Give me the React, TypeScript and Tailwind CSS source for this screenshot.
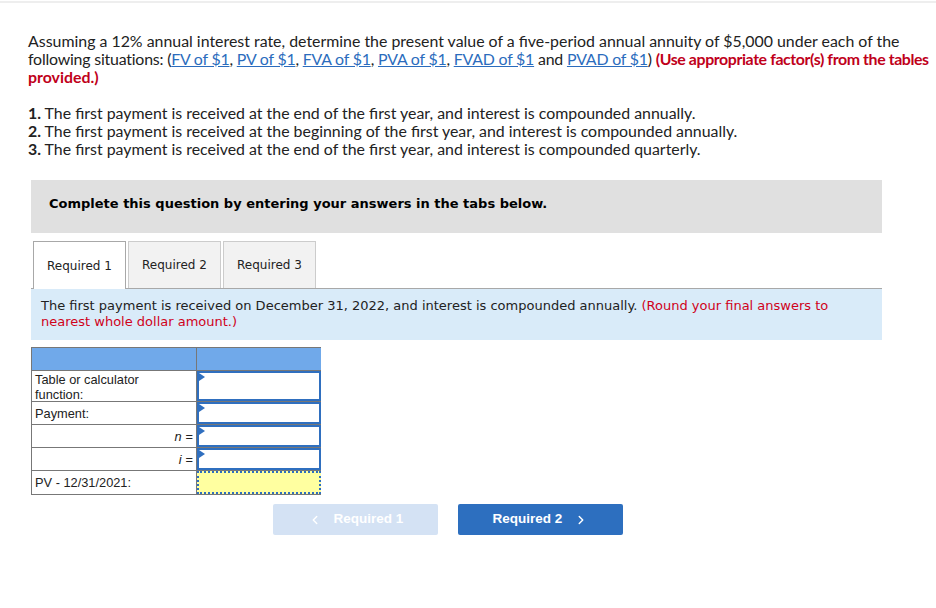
import { ChevronLeft, ChevronRight } from 'lucide-react';

const links = ['FV of $1', 'PV of $1', 'FVA of $1', 'PVA of $1', 'FVAD of $1'];

function InputCell() {
  return (
    <div className="relative h-full border-2 border-[#2f6fbf] bg-white">
      <span className="absolute left-0 top-0 h-0 w-0 border-y-[4px] border-l-[6px] border-y-transparent border-l-[#2f6fbf]" />
    </div>
  );
}

export default function App() {
  return (
    <div className="w-[936px] h-[608px] bg-white overflow-hidden">
      <div className="h-[3px] border-b-2 border-[#eeeeee]" />
      <div className="pl-[28px] pt-[29px] text-[15.9px] leading-[18px] text-[#222]" style={{ fontFamily: 'Lato, sans-serif' }}>
        <p className="whitespace-nowrap">
          Assuming a 12% annual interest rate, determine the present value of a five-period annual annuity of $5,000 under each of the
        </p>
        <p className="whitespace-nowrap tracking-[-0.2px]">
          following situations: (
          {links.map((l, i) => (
            <span key={l}>
              <a className="text-[#2b6cbd] underline">{l}</a>
              {i < links.length - 1 ? ', ' : ' '}
            </span>
          ))}
          and <a className="text-[#2b6cbd] underline">PVAD of $1</a>){' '}
          <span className="font-bold tracking-[-0.4px] text-[#c0001a]">(Use appropriate factor(s) from the tables</span>
        </p>
        <p className="font-bold text-[#c0001a]">provided.)</p>

        <div className="mt-[18px]">
          <p><b>1.</b> The first payment is received at the end of the first year, and interest is compounded annually.</p>
          <p><b>2.</b> The first payment is received at the beginning of the first year, and interest is compounded annually.</p>
          <p><b>3.</b> The first payment is received at the end of the first year, and interest is compounded quarterly.</p>
        </div>
      </div>

      <div className="ml-[31px] w-[851px]" style={{ fontFamily: '"DejaVu Sans", Verdana, sans-serif' }}>
        <div className="mt-[22px] h-[53px] bg-[#e0e0e0] pl-[18px] pt-[14px] text-[13px] font-bold text-black">
          Complete this question by entering your answers in the tabs below.
        </div>

        <div className="mt-[8px] flex gap-[2px] border-b border-[#a8a8a8] pl-[2px] text-[12px] text-[#222]">
          <div className="-mb-px flex h-[48px] w-[93px] items-center justify-center border border-b-0 border-[#a8a8a8] bg-white">Required 1</div>
          <div className="flex h-[47px] w-[93px] items-center justify-center border border-b-0 border-[#cccccc] bg-[#f2f2f2]">Required 2</div>
          <div className="flex h-[47px] w-[93px] items-center justify-center border border-b-0 border-[#cccccc] bg-[#f2f2f2]">Required 3</div>
        </div>

        <div className="h-[51px] bg-[#d9ebf9] pl-[10px] pr-[20px] pt-[9px] text-[13px] leading-[16px] text-[#222]">
          The first payment is received on December 31, 2022, and interest is compounded annually.{' '}
          <span className="text-[#d0021b]">(Round your final answers to nearest whole dollar amount.)</span>
        </div>
      </div>

      <div className="ml-[31px] mt-[7px] w-[290px] text-[12.8px] leading-[15px] text-[#222]" style={{ fontFamily: '"Liberation Sans", Arial, sans-serif' }}>
        <div className="grid grid-cols-[165px_124px] grid-rows-[23px_31px_23px_23px_23px_23px] border border-[#777]">
          <div className="border-r border-b border-[#777] bg-[#70a9ea]" />
          <div className="border-b border-[#777] bg-[#70a9ea]" />

          <div className="border-r border-b border-[#777] pl-[3px] pr-[12px] pt-px">Table or calculator function:</div>
          <div className="border-b border-[#777]"><InputCell /></div>

          <div className="border-r border-b border-[#777] px-[3px] flex items-center">Payment:</div>
          <div className="border-b border-[#777]"><InputCell /></div>

          <div className="border-r border-b border-[#777] px-[3px] flex items-center justify-end italic">n <span className="not-italic ml-1">=</span></div>
          <div className="border-b border-[#777]"><InputCell /></div>

          <div className="border-r border-b border-[#777] px-[3px] flex items-center justify-end italic">i <span className="not-italic ml-1">=</span></div>
          <div className="border-b border-[#777]"><InputCell /></div>

          <div className="border-r border-[#777] px-[3px] flex items-center">PV - 12/31/2021:</div>
          <div className="border-2 border-dotted border-[#2f6fbf] bg-[#ffffa0]" />
        </div>
      </div>

      <div className="mt-[9px] flex gap-[20px] pl-[273px] text-[13.5px] font-bold text-white" style={{ fontFamily: '"Liberation Sans", Arial, sans-serif' }}>
        <button className="flex h-[31px] w-[165px] items-center justify-center gap-[12px] rounded-[2px] bg-[#d4e2f4]">
          <ChevronLeft size={14} strokeWidth={2.5} />
          Required 1
        </button>
        <button className="flex h-[31px] w-[165px] items-center justify-center gap-[12px] rounded-[2px] bg-[#2d6fbf]">
          Required 2
          <ChevronRight size={14} strokeWidth={2.5} />
        </button>
      </div>
    </div>
  );
}
